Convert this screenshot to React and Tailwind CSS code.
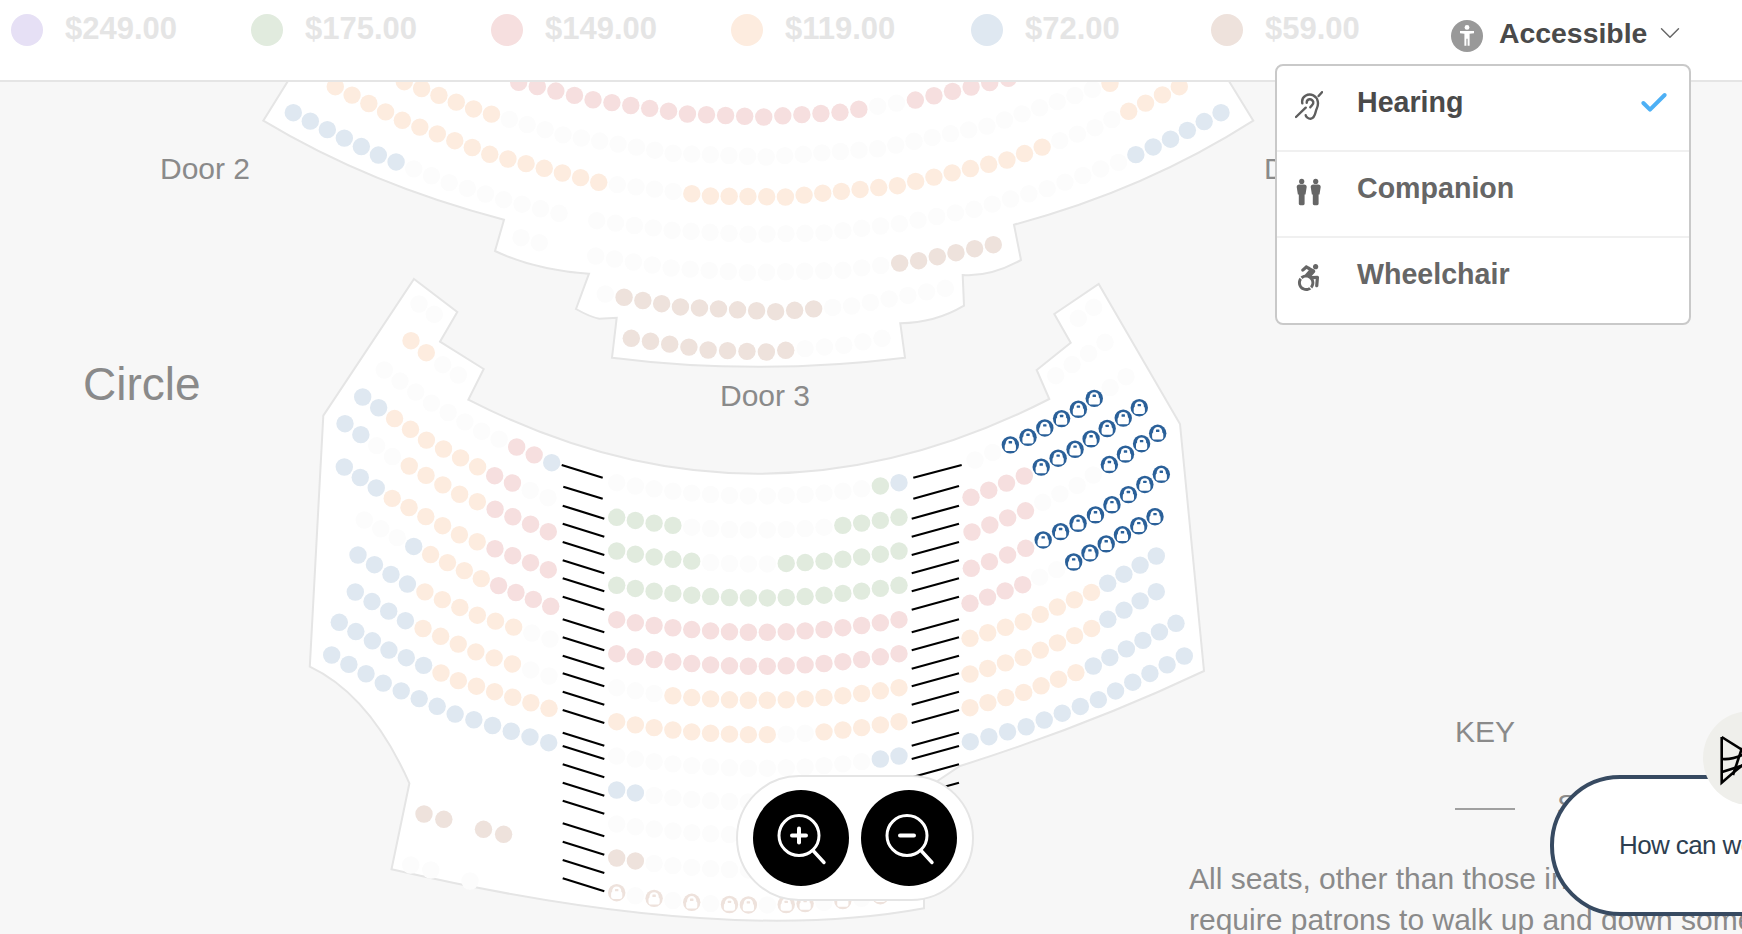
import { Check, ChevronDown } from 'lucide-react';
import { FaAccessibleIcon } from 'react-icons/fa';

const COLORS = {
  p: '#e6e0f5',
  g: '#e1ebde',
  r: '#f6dfdf',
  o: '#fdecdf',
  b: '#dfe8f1',
  n: '#eee2dc',
  e: '#fcfcfc',
};

const PRICES = [
  { color: 'bg-[#e6e0f5]', label: '$249.00' },
  { color: 'bg-[#e1ebde]', label: '$175.00' },
  { color: 'bg-[#f6dfdf]', label: '$149.00' },
  { color: 'bg-[#fdecdf]', label: '$119.00' },
  { color: 'bg-[#dfe8f1]', label: '$72.00' },
  { color: 'bg-[#eee2dc]', label: '$59.00' },
];

// Rows: knots the row runs through + seat runs ('b7 e9' = 7 blue, 9 empty).
// l = blue lock, k = faded lock
const ROWS = [
  // upper section
  [[[293.3, 112.7], [378.3, 155], [449.3, 182.7], [503.7, 199.7], [559, 213.3]], 'b7 e9'],
  [[[596.7, 220.7], [672, 230.3], [748.3, 234.3], [823.3, 233], [899.3, 223.7], [974, 209.3], [1047, 188.7], [1118.7, 162.3], [1170.3, 139.3], [1221, 112.7]], 'e29 b6'],
  [[[335.3, 86.7], [402.3, 120.3], [489.7, 154.3], [598.7, 182.3], [710.3, 196], [785.3, 197], [897.3, 185.7], [1007, 160], [1095, 127.7], [1179.3, 86.7]], 'o16 e4 o20 e4 o4'],
  [[[404.3, 81.7], [473.7, 109], [563.3, 135], [673.3, 153.3], [766.7, 157], [878.3, 148.7], [987.3, 126], [1110, 83.3]], 'o6 e33 o1'],
  [[[518.7, 82.3], [592.7, 99.7], [687, 114], [763.7, 117], [840, 112.3], [915.7, 100], [1008.3, 78.3]], 'r19 e2 r6'],
  [[[521, 237.7], [539.3, 242.7]], 'e2'],
  [[[595.7, 256], [671, 268], [748.3, 272.7], [842.7, 270.3], [918.7, 260.7], [993.3, 244.7]], 'e16 n6'],
  [[[605.3, 294], [680.7, 307], [775.7, 311.7], [851.7, 306], [945.3, 288.3]], 'e1 n11 e7'],
  [[[631.3, 338.3], [708, 350], [766.3, 352], [843.7, 345.3], [882, 338.3]], 'n9 e5'],

  // circle, left block
  [[[419, 304], [434.3, 314.3]], 'e2'],
  [[[411, 340.7], [426.3, 352.7]], 'o2'],
  [[[442.7, 364.7], [458.3, 375]], 'e2'],
  [[[384.3, 370], [431.3, 403], [481.7, 431.3], [551.7, 462.7]], 'e8 r2 b1'],
  [[[362.7, 397], [426.3, 440], [494.7, 475.7], [548, 497.7]], 'b2 o6 r2 e2'],
  [[[345, 423.7], [392.7, 456.7], [459.7, 494.3], [548.3, 531.7]], 'b2 e2 o5 r4'],
  [[[344.3, 467], [392, 498.3], [459.3, 534.7], [548.3, 569.7]], 'b3 o6 r4'],
  [[[364.3, 520], [415.3, 547.3], [482.7, 579.3], [550.7, 606.3]], 'e3 b1 o4 r4'],
  [[[358, 555], [407.3, 584], [476.7, 615], [550, 639]], 'b4 o6 e2'],
  [[[355.3, 592], [405.4, 620.7], [475.4, 651.7], [549, 676]], 'b4 o6 e2'],
  [[[339.3, 622.3], [388.8, 650], [458.5, 680.7], [549, 708.3]], 'b6 o7'],
  [[[331.7, 655], [383, 683], [455, 714], [548.7, 742.7]], 'b13'],
  [[[424, 814], [443.8, 819.3]], 'n2'],
  [[[483.5, 829.3], [503.6, 834.3]], 'n2'],
  [[[410.7, 865], [430.8, 870]], 'e2'],
  [[[470, 881]], 'e1'],

  // circle, right block
  [[[1078.3, 318.3], [1093.7, 307.3]], 'e2'],
  [[[1055.7, 375.7], [1105, 342.3]], 'e4'],
  [[[975, 460], [1028, 437.3], [1078.3, 409.3], [1126, 376.7]], 'e2 l6 e2'],
  [[[971, 497.3], [1024.3, 476], [1075, 449.3], [1139.3, 407.7]], 'r4 l7'],
  [[[972, 532], [1025.7, 510.7], [1077.3, 485.3], [1157.7, 433.3]], 'r4 e4 l4'],
  [[[971.3, 568.3], [1025.7, 548.3], [1095.3, 515], [1161.3, 474.3]], 'r4 l8'],
  [[[970, 603.3], [1022.7, 584.7], [1073.7, 562], [1155, 516.7]], 'r4 e2 l6'],
  [[[970, 638.3], [1023.3, 621.7], [1091.7, 592.3], [1156.3, 556]], 'o8 b4'],
  [[[970, 674], [1023.3, 657.3], [1092, 628.3], [1156.3, 591.7]], 'o8 b4'],
  [[[970, 707.7], [1024, 692.3], [1093.3, 666], [1176, 623.3]], 'o7 b6'],
  [[[970.3, 741.7], [1026.3, 726.7], [1098.3, 699.7], [1184.3, 656]], 'b13'],
];

// centre block: [y at the ends, y in the middle, seats]
const CENTER_ROWS = [
  [482.7, 496, 'e14 g1 b1'],
  [517.3, 530, 'g4 e8 g4'],
  [551, 564, 'g5 e4 g7'],
  [585.3, 598, 'g16'],
  [619.7, 632.3, 'r16'],
  [653.7, 666.3, 'r16'],
  [687.7, 700.3, 'e3 o13'],
  [721.7, 734.7, 'o9 e2 o5'],
  [756, 768.3, 'e14 b2'],
  [790, 802, 'b2 e14'],
  [824, 835, 'e16'],
  [858, 870, 'n2 e14'],
  [892.7, 905, 'k1 e1 k1 e1 k1 e1 k2 e1 k2 e1 k1 e1 k1 e1'],
];

const STAIR_Y = [505.7, 523.7, 542, 560.3, 578.3, 596.7, 619.3, 637.3, 655.7, 673.3, 691.7, 710, 732.7, 746, 764.3, 782.7];
const STAIR_Y_LEFT = [...STAIR_Y, 800.7, 823.3, 841.7, 860, 878.3];

function centerKnots(yEnd, yMid) {
  const knots = [];
  for (let i = 0; i <= 15; i++) {
    const x = 616.7 + i * 18.82;
    const t = (x - 757.8) / 141.1;
    knots.push([x, yMid + (yEnd - yMid) * t * t]);
  }
  return knots;
}

function expandSeats(runs) {
  return runs.split(' ').flatMap((run) => Array(parseInt(run.slice(1), 10)).fill(run[0]));
}

function placeSeats(knots, runs) {
  const seats = expandSeats(runs);
  if (knots.length === 1) return [{ x: knots[0][0], y: knots[0][1], kind: seats[0] }];

  const lengths = [0];
  for (let i = 1; i < knots.length; i++) {
    lengths.push(lengths[i - 1] + Math.hypot(knots[i][0] - knots[i - 1][0], knots[i][1] - knots[i - 1][1]));
  }
  const total = lengths[lengths.length - 1];

  return seats.map((kind, i) => {
    const at = (total * i) / (seats.length - 1);
    let s = 1;
    while (s < knots.length - 1 && lengths[s] < at) s++;
    const f = (at - lengths[s - 1]) / (lengths[s] - lengths[s - 1]);
    return {
      x: knots[s - 1][0] + (knots[s][0] - knots[s - 1][0]) * f,
      y: knots[s - 1][1] + (knots[s][1] - knots[s - 1][1]) * f,
      kind,
    };
  });
}

const ALL_SEATS = [
  ...ROWS.flatMap(([knots, runs]) => placeSeats(knots, runs)),
  ...CENTER_ROWS.flatMap(([yEnd, yMid, runs]) => placeSeats(centerKnots(yEnd, yMid), runs)),
];

function Seat({ x, y, kind }) {
  if (kind === 'l' || kind === 'k') {
    const ink = kind === 'l' ? '#2a6099' : '#eee2dc';
    return (
      <g transform={`translate(${x} ${y})`}>
        <circle r="8.7" fill={ink} />
        <circle cy="-1.6" r="4.6" fill="#fff" />
        <rect x="-5.6" y="-1.4" width="11.2" height="7.6" rx="2.6" fill="#fff" />
        <rect x="-1.7" y="-3.8" width="3.4" height="2.4" rx="0.5" fill={ink} />
      </g>
    );
  }
  return <circle cx={x} cy={y} r="8.7" fill={COLORS[kind]} />;
}

function SeatMap() {
  return (
    <svg viewBox="0 82 1742 852" className="absolute inset-0 block h-[852px] w-[1742px]">
      {/* sections */}
      <path
        d="M301 60 L263.3 120.7 Q370 185 504 219.7 L495 251 Q535 270 589 273.7 L576 309 Q590 317 599.3 318.7 L616.7 317.7 L612 357.7 Q757 376 905 357.7 L900.3 323.3 Q935 323 964 305.7 L962.7 275 Q990 277 1021 260 L1014 224.7 Q1145 190 1253.3 120.7 L1216 60 Z"
        fill="#fff"
        stroke="#e5e5e5"
        strokeWidth="2"
      />
      <path
        d="M414 279 L457.3 312 L440 341.7 L483.7 369 L468.3 399.7 Q758 548 1049.3 399 L1036.7 370 L1070.7 342.7 L1054.3 314 L1098.7 284 L1180 424 L1204 671 Q1090 725 960 766 L924 790 L924 908.3 Q722 946 391.5 869.3 L409.4 783.3 Q370 695 309.8 666.7 L323.3 415.7 Z"
        fill="#fff"
        stroke="#e5e5e5"
        strokeWidth="2"
      />

      {/* stairs */}
      <g stroke="#000" strokeWidth="2.2">
        <line x1="561.7" y1="465" x2="602.7" y2="477.7" />
        <line x1="563.3" y1="486.7" x2="602.7" y2="498.7" />
        {STAIR_Y_LEFT.map((y) => (
          <line key={y} x1="562.7" y1={y} x2="604.3" y2={y + 13} />
        ))}
        <line x1="913.3" y1="477.7" x2="961.7" y2="465" />
        <line x1="913.3" y1="498.7" x2="959" y2="486" />
        {STAIR_Y.map((y) => (
          <line key={y} x1="911.7" y1={y + 13} x2="959" y2={y} />
        ))}
      </g>

      {ALL_SEATS.map((seat, i) => (
        <Seat key={i} {...seat} />
      ))}

      <g fill="#8a8a8a" className="text-[30px]">
        <text x="160" y="179">Door 2</text>
        <text x="720" y="406">Door 3</text>
        <text x="1264" y="179">Door 4</text>
      </g>
      <text x="83" y="400" fill="#8a8a8a" className="text-[46px]">Circle</text>
    </svg>
  );
}

function ZoomIcon({ minus }) {
  return (
    <svg viewBox="0 0 96 96" className="h-24 w-24" fill="none" stroke="#fff">
      <circle cx="46" cy="45.5" r="20" strokeWidth="3" />
      <line x1="60" y1="60.5" x2="71" y2="72.5" strokeWidth="3.4" strokeLinecap="round" />
      <line x1="39" y1="45.5" x2="53" y2="45.5" strokeWidth="4" strokeLinecap="round" />
      {!minus && <line x1="46" y1="38.5" x2="46" y2="52.5" strokeWidth="4" strokeLinecap="round" />}
    </svg>
  );
}

function PersonIcon() {
  return (
    <svg viewBox="0 0 32 32" className="h-8 w-8 rounded-full bg-[#999]" fill="#fff">
      <circle cx="16" cy="7.4" r="2.4" />
      <path d="M9 11h14v2.2l-4.4.6v12h-2v-7h-1.2v7h-2v-12L9 13.2z" />
    </svg>
  );
}

function HearingIcon() {
  return (
    <svg viewBox="0 0 28 29" className="h-[29px] w-7" fill="none" stroke="#5e5e5e" strokeWidth="2.4" strokeLinecap="round">
      <path d="M7.3 12.3C6 5 13.3 2.3 18.3 4.3C23.3 6.7 24 13.3 21.7 17.7C20 21 20.7 26.7 16 27.7C13.3 28 10.7 25.7 10.7 24.3" />
      <path d="M11.7 11.7C11.7 7.7 16.7 6.7 18.3 11C19 13.3 16.7 14.3 15.3 16.3" />
      <path d="M1 26L10.7 16.7" />
      <path d="M23.6 5L27 1.2" />
    </svg>
  );
}

function CompanionIcon() {
  return (
    <svg viewBox="0 0 28 28" className="h-7 w-7" fill="#666">
      <circle cx="6.7" cy="3.4" r="2.6" />
      <path d="M1.7 9a2.6 2.6 0 0 1 2.6-2.6h4.8A2.6 2.6 0 0 1 11.7 9l-1.2 7.5-.9 0v9.3a1.4 1.4 0 0 1-1.4 1.4H5.2a1.4 1.4 0 0 1-1.4-1.4v-9.3l-.9 0z" />
      <circle cx="20.7" cy="3.4" r="2.6" />
      <path d="M15.7 9a2.6 2.6 0 0 1 2.6-2.6h4.8A2.6 2.6 0 0 1 25.7 9l-1.2 7.5-.9 0v9.3a1.4 1.4 0 0 1-1.4 1.4h-3a1.4 1.4 0 0 1-1.4-1.4v-9.3l-.9 0z" />
    </svg>
  );
}

function ChatLogo() {
  return (
    <svg viewBox="0 0 40 52" className="absolute left-[17px] top-[23px] h-[52px] w-10" fill="none" stroke="#000" strokeWidth="2.6">
      <path d="M1.7 3 L1.7 48.7 L14 38 L24 30" />
      <path d="M1.7 3 L24 17" />
      <path d="M22 14 L13 41" />
      <path d="M2 25 Q12 26 24 20" />
      <path d="M2 38 L24 31" />
    </svg>
  );
}

export default function App() {
  return (
    <div className="relative flex h-[934px] w-[1742px] flex-col overflow-hidden bg-[#f7f7f7] font-['Liberation_Sans',Arial,sans-serif]">

      {/* Price legend */}
      <header className="relative z-10 flex h-[82px] shrink-0 items-start border-b-2 border-[#e5e5e5] bg-white pl-[11px] pt-[14px]">
        {PRICES.map((price) => (
          <div key={price.label} className="flex w-[240px] items-center gap-[22px]">
            <span className={`h-8 w-8 rounded-full ${price.color}`} />
            <span className="-mt-[2px] text-[31px] font-bold leading-[30px] text-[#e5e5e5]">{price.label}</span>
          </div>
        ))}
        <div className="mt-[6px] flex items-start gap-4">
          <PersonIcon />
          <span className="-mt-[3px] text-[28.4px] font-bold leading-8 text-[#4a4a4a]">Accessible</span>
          <ChevronDown size={34} strokeWidth={1} className="-ml-[10px] -mt-[4px] text-[#666]" />
        </div>
      </header>

      {/* Map and key */}
      <main className="relative flex-1">
        <SeatMap />
        <div className="relative ml-[1189px] whitespace-nowrap pt-[632px] text-[30px] text-[#8a8a8a]">
          <div className="pl-[266px] leading-9">KEY</div>
          <div className="mt-[37px] flex items-center gap-[42px] pl-[266px] leading-9">
            <span className="mt-[7px] h-[2px] w-[60px] bg-[#a0a0a0]" />
            <span>Stairs</span>
          </div>
          <p className="mt-[35px] leading-[41px]">
            All seats, other than those in the front row,
            <br />
            require patrons to walk up and down some stairs
          </p>
        </div>
      </main>

      {/* Accessible dropdown */}
      <div className="absolute left-[1275px] top-[64px] z-20 w-[416px] rounded-lg border-2 border-[#c9c9c9] bg-white">
        <div className="flex h-[86px] items-start border-b-2 border-[#f0f0f0] pl-[18px] pt-[18px]">
          <span className="mt-[7px] w-[62px]">
            <HearingIcon />
          </span>
          <span className="text-[28.6px] font-bold leading-9 text-[#4a4a4a]">Hearing</span>
          <Check size={32} strokeWidth={3} className="ml-auto mr-[19px] mt-[3px] text-[#4db0f5]" />
        </div>
        <div className="flex h-[86px] items-start border-b-2 border-[#f0f0f0] pl-[18px] pt-[18px]">
          <span className="mt-[8px] w-[62px]">
            <CompanionIcon />
          </span>
          <span className="text-[28.6px] font-bold leading-9 text-[#666]">Companion</span>
        </div>
        <div className="flex h-[85px] items-start pl-[18px] pt-[18px]">
          <span className="mt-[8px] w-[62px] text-[#666]">
            <FaAccessibleIcon size={27} />
          </span>
          <span className="text-[28.6px] font-bold leading-9 text-[#666]">Wheelchair</span>
        </div>
      </div>

      {/* Zoom controls */}
      <div className="absolute left-[736px] top-[775px] z-20 flex gap-3 rounded-[63px] border-2 border-[#e5e5e5] bg-white p-[13px] pl-[15px] pr-[15px]">
        <button className="h-24 w-24 rounded-full bg-black">
          <ZoomIcon />
        </button>
        <button className="h-24 w-24 rounded-full bg-black">
          <ZoomIcon minus />
        </button>
      </div>

      {/* Chat prompt */}
      <div className="absolute left-[1550px] top-[775px] z-20 flex h-[141px] w-[320px] items-center rounded-[70px] border-4 border-[#374a61] bg-white pl-[65px] text-[26px] tracking-[-0.6px] text-[#2d3e50]">
        <span className="whitespace-nowrap">How can we help?</span>
      </div>
      <div className="absolute left-[1703px] top-[711px] z-30 h-[94px] w-[94px] rounded-full bg-[#efefeb]">
        <ChatLogo />
      </div>
    </div>
  );
}
